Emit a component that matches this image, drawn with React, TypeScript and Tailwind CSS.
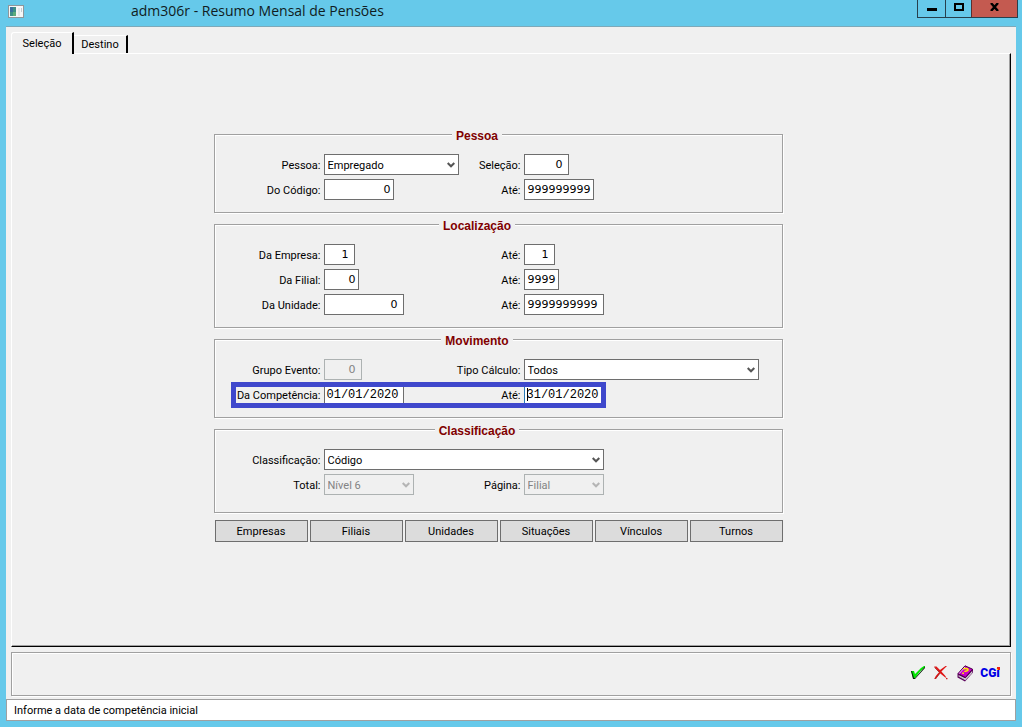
import React, { useState } from 'react'
import clsx from 'clsx'

const ETCHED = 'border border-[#a0a0a0] shadow-[1px_1px_0_#fff,inset_1px_1px_0_#fff]'

/* ── Icons ── */
function WindowIcon() {
  return (
    <svg width="16" height="13" viewBox="0 0 16 13" shapeRendering="crispEdges" aria-hidden="true">
      <rect x="0" y="0" width="16" height="13" fill="#8f979b" />
      <rect x="1" y="1" width="14" height="11" fill="#f7f7f7" />
      <rect x="2" y="2" width="6" height="9" fill="#3c8f86" />
      <rect x="2" y="2" width="3" height="5" fill="#39719f" />
      <rect x="5" y="7" width="3" height="4" fill="#5cab7c" />
      <rect x="10" y="3" width="2" height="8" fill="#e2e8ea" />
      <rect x="13" y="3" width="1" height="4" fill="#c3cdd1" />
    </svg>
  )
}

function CheckIcon() {
  return (
    <svg width="14" height="14" viewBox="0 0 14 14" aria-hidden="true">
      <path d="M0 5h3l1 3 6-6 3-2h1v1L9 5.5 4 12H2z" fill="#00e800" />
      <path d="M0 5h1l2 7h1L14 .5V2L4 13H2z" fill="#062806" />
    </svg>
  )
}

function CancelIcon() {
  return (
    <svg width="14" height="14" viewBox="0 0 14 14" aria-hidden="true">
      <path d="M0 .5h2.5L6 4l5.5-4H13L7.4 5.6 11 9.5l1.5 2.3-1.2-.4L6 7.2 3 11l-1.5 2H.2L1.8 10l3.4-4z" fill="#e01414" />
      <path d="M.5 1.5 5 6M6 7.2 3 11l-1.5 2" fill="none" stroke="#8e0a0a" strokeWidth=".7" />
      <path d="M12 12h1.5v1.2H12z" fill="#d02020" />
    </svg>
  )
}

function BookIcon() {
  return (
    <svg width="17" height="17" viewBox="0 0 17 17" aria-hidden="true">
      <path d="M.5 8.5v4L8 16.5 16 7.5V4z" fill="#5a005a" />
      <path d="M1.6 10.2 8.4 13.6 15.2 6v1.8l-6.8 7.4-6.8-3.6z" fill="#fff" />
      <path d="M1.8 11.2 8.4 14.6 15 7.2" fill="none" stroke="#777" strokeWidth=".5" />
      <path d="M1 8.6 8 .8l7.6 3.4-7.2 8.2z" fill="#c800c8" stroke="#4a004a" />
      <path d="M2.2 8.6 8 2" stroke="#f8b8f8" fill="none" />
      <path d="M6.4 4.2c1.8-1.2 5-.6 4.6.9-.3 1.1-2.8.6-3.6 1.7M5.2 8.2H7" stroke="#ffe600" strokeWidth="1.6" fill="none" />
    </svg>
  )
}

/* ── Form pieces ── */
function FieldLabel({ htmlFor, children }: { htmlFor: string; children: React.ReactNode }) {
  return (
    <label htmlFor={htmlFor} className="h-[21px] text-right leading-[23px] whitespace-nowrap">
      {children}
    </label>
  )
}

interface TextFieldProps {
  id: string
  label: string
  value: string
  className: string
  disabled?: boolean
  active?: boolean
}

function TextField({ id, label, value, className, disabled, active }: TextFieldProps) {
  const [text, setText] = useState(value)
  const isDate = value.includes('/')
  return (
    <>
      <FieldLabel htmlFor={id}>{label}</FieldLabel>
      <div className="relative h-[21px]">
        <input
          id={id}
          value={text}
          disabled={disabled}
          onChange={(e) => setText(e.target.value)}
          className={clsx(
            'block h-[21px] border text-right outline-none',
            isDate
              ? 'font-["Liberation_Mono",monospace] text-[12px]'
              : 'font-["DejaVu_Sans",sans-serif] text-[11px]',
            disabled ? 'border-[#adb2b2] bg-[#f0f0f0] text-[#838383]' : 'bg-white text-black',
            !disabled && (active ? 'border-[#2a7ab8]' : 'border-[#6e6e6e]'),
            className,
          )}
        />
        {active && <span className="absolute top-1 left-[3px] h-[13px] w-px bg-black" />}
      </div>
    </>
  )
}

interface SelectFieldProps {
  id: string
  label: string
  options: string[]
  className: string
  disabled?: boolean
}

function SelectField({ id, label, options, className, disabled }: SelectFieldProps) {
  return (
    <>
      <FieldLabel htmlFor={id}>{label}</FieldLabel>
      <div className={clsx('relative h-[21px]', className)}>
        <select
          id={id}
          disabled={disabled}
          className={clsx(
            'block h-[21px] w-full appearance-none border pt-0.5 pl-[3px] outline-none',
            disabled
              ? 'border-[#adb2b2] bg-[#f0f0f0] text-[#838383] opacity-100'
              : 'border-[#6e6e6e] bg-white text-black',
          )}
        >
          {options.map((o) => (
            <option key={o}>{o}</option>
          ))}
        </select>
        <svg
          width="8"
          height="6"
          viewBox="0 0 8 6"
          className={clsx(
            'pointer-events-none absolute top-2 right-1',
            disabled ? 'text-[#b4b4b4]' : 'text-[#555]',
          )}
          aria-hidden="true"
        >
          <path d="M.7 1 4 4.3 7.3 1" fill="none" stroke="currentColor" strokeWidth="2" />
        </svg>
      </div>
    </>
  )
}

function Group({ title, className, children }: { title: string; className?: string; children: React.ReactNode }) {
  return (
    <fieldset className={clsx(ETCHED, 'min-w-0 pt-3 pr-[42px]', className ?? 'pb-3')}>
      <legend className="mx-auto h-[15px] bg-[#f0f0f0] px-1 pt-[3px] font-['Liberation_Sans',sans-serif] text-[12px] leading-[13px] font-bold text-[#800000]">
        {title}
      </legend>
      <div className="flex flex-col gap-1">{children}</div>
    </fieldset>
  )
}

function Row({ highlight, children }: { highlight?: boolean; children: React.ReactNode }) {
  return (
    <div className="relative grid grid-cols-[106px_117px_77px_1fr] gap-x-[3px]">
      {children}
      {highlight && (
        <div className="pointer-events-none absolute -top-0.5 left-4 h-[26px] w-[375px] border-5 border-[#3f48cc]" />
      )}
    </div>
  )
}

/* ── Window parts ── */
function TitleBar() {
  return (
    <header className="flex h-[26px] items-start justify-between pl-0.5">
      <div className="flex h-[22px] items-center">
        <WindowIcon />
        <h1 className="ml-[107px] font-['Open_Sans',sans-serif] text-[14px] text-[#101c22]">
          adm306r - Resumo Mensal de Pensões
        </h1>
      </div>
      <div className="-mr-0.5 flex h-[18px] border-x border-b border-[#27404d]">
        <button aria-label="Minimizar" className="flex w-[28px] justify-center border-r border-[#27404d] pt-2">
          <span className="h-[3px] w-[10px] bg-black" />
        </button>
        <button aria-label="Maximizar" className="flex w-[25px] justify-center pt-[3px]">
          <span className="h-2 w-[10px] border-2 border-black" />
        </button>
        <button aria-label="Fechar" className="flex w-[46px] justify-center border-l border-[#5b2f2f] bg-[#c45a50] pt-[3px]">
          <svg width="9" height="8" viewBox="0 0 9 8" aria-hidden="true">
            <path d="M1 0 8 8M8 0 1 8" stroke="#000" strokeWidth="2.4" />
          </svg>
        </button>
      </div>
    </header>
  )
}

function Tabs() {
  return (
    <div role="tablist" className="flex items-end pl-[5px]">
      <button
        role="tab"
        aria-selected="true"
        className="relative -mb-px h-[22px] w-[63px] rounded-tl-[3px] border-t border-r-2 border-l border-t-white border-r-black border-l-white bg-[#f0f0f0]"
      >
        Seleção
      </button>
      <button
        role="tab"
        aria-selected="false"
        className="h-[18px] w-[54px] border-t border-r-2 border-t-white border-r-black"
      >
        Destino
      </button>
    </div>
  )
}

const LISTS = ['Empresas', 'Filiais', 'Unidades', 'Situações', 'Vínculos', 'Turnos']

function SelectionForm() {
  return (
    <form className="mx-auto flex w-[569px] flex-col gap-1" onSubmit={(e) => e.preventDefault()}>
      <Group title="Pessoa">
        <Row>
          <SelectField id="pessoa" label="Pessoa:" options={['Empregado']} className="w-[135px]" />
          <TextField id="selecao" label="Seleção:" value="0" className="w-[45px] pr-[5px]" />
        </Row>
        <Row>
          <TextField id="codigo-de" label="Do Código:" value="0" className="w-[70px] pr-0.5" />
          <TextField id="codigo-ate" label="Até:" value="999999999" className="w-[70px] pr-0.5" />
        </Row>
      </Group>

      <Group title="Localização">
        <Row>
          <TextField id="empresa-de" label="Da Empresa:" value="1" className="w-[31px] pr-[5px]" />
          <TextField id="empresa-ate" label="Até:" value="1" className="w-[31px] pr-[5px]" />
        </Row>
        <Row>
          <TextField id="filial-de" label="Da Filial:" value="0" className="w-[35px] pr-0.5" />
          <TextField id="filial-ate" label="Até:" value="9999" className="w-[35px] pr-0.5" />
        </Row>
        <Row>
          <TextField id="unidade-de" label="Da Unidade:" value="0" className="w-[80px] pr-[5px]" />
          <TextField id="unidade-ate" label="Até:" value="9999999999" className="w-[80px] pr-[5px]" />
        </Row>
      </Group>

      <Group title="Movimento">
        <Row>
          <TextField id="grupo" label="Grupo Evento:" value="0" className="w-[38px] pr-[5px]" disabled />
          <SelectField id="tipo" label="Tipo Cálculo:" options={['Todos']} className="w-[235px]" />
        </Row>
        <Row highlight>
          <TextField id="competencia-de" label="Da Competência:" value="01/01/2020" className="w-[80px] pr-1" />
          <TextField id="competencia-ate" label="Até:" value="31/01/2020" className="w-[80px] pr-1" active />
        </Row>
      </Group>

      <Group title="Classificação" className="pb-[17px]">
        <Row>
          <SelectField id="classificacao" label="Classificação:" options={['Código']} className="w-[280px]" />
        </Row>
        <Row>
          <SelectField id="total" label="Total:" options={['Nível 6']} className="w-[90px]" disabled />
          <SelectField id="pagina" label="Página:" options={['Filial']} className="w-[80px]" disabled />
        </Row>
      </Group>

      <div className="mt-[3px] ml-px grid grid-cols-6 gap-0.5">
        {LISTS.map((name) => (
          <button key={name} type="button" className="h-[22px] border border-[#6e6e6e] bg-[#dcdcdc] pt-0.5">
            {name}
          </button>
        ))}
      </div>
    </form>
  )
}

/* ── Root ── */
export default function App() {
  return (
    <div className="flex min-h-screen flex-col bg-[#66c9ea] px-1.5 pb-1.5 font-['Roboto','Liberation_Sans',sans-serif] text-[11px] leading-4 text-black">
      <TitleBar />
      <div className="flex flex-1 flex-col border-t border-[#7ea9b9] bg-[#f0f0f0] pt-[5px]">
        <Tabs />
        <main className="mx-[5px] flex-1 border-t border-r border-b border-l border-t-white border-r-black border-b-black border-l-white pt-[73px] pr-[26px] pb-4 shadow-[inset_-1px_-1px_0_#a0a0a0]">
          <SelectionForm />
        </main>
        <div className={clsx(ETCHED, 'mx-[5px] mt-[5px] mb-[3px] flex h-11 items-center justify-end pr-2.5 pb-0.5')}>
          <button aria-label="Confirmar" className="w-[23px]"><CheckIcon /></button>
          <button aria-label="Cancelar" className="w-[23px]"><CancelIcon /></button>
          <button aria-label="Ajuda" className="w-[23px]"><BookIcon /></button>
          <button className="relative text-[12px] leading-4 font-black text-[#0000e6]">
            CGI
            <span className="absolute top-0.5 right-0 flex size-[3px] items-end bg-[#f02010]">
              <span className="size-px bg-[#ffd800]" />
            </span>
          </button>
        </div>
        <footer className="h-[22px] border border-[#a0a0a0] bg-white pl-[7px] leading-[21px]">
          Informe a data de competência inicial
        </footer>
      </div>
    </div>
  )
}
